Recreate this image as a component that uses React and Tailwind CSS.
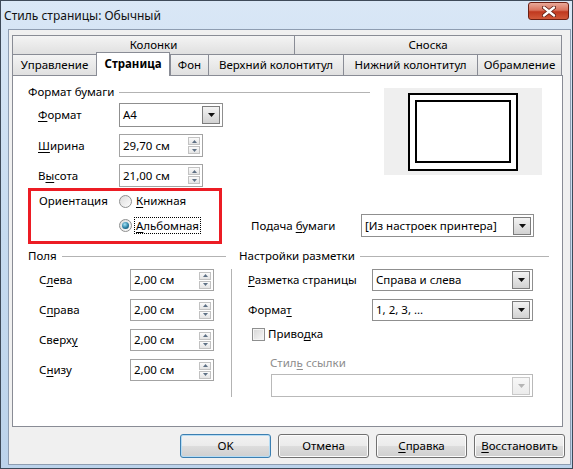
import React from "react";

const U = ({ children }) => (
  <span className="underline decoration-1 underline-offset-[2px]">{children}</span>
);

function DropBtn({ disabled }) {
  return (
    <div
      className={
        disabled
          ? "ml-auto w-[18px] h-[18px] border border-[#c9c9c9] bg-gradient-to-b from-[#f7f7f7] to-[#ececec] flex items-center justify-center shrink-0"
          : "ml-auto w-[18px] h-[18px] border border-[#7d7d7d] bg-gradient-to-b from-[#f3f3f3] to-[#d2d2d2] flex items-center justify-center shrink-0"
      }
    >
      <svg width="7" height="4" viewBox="0 0 7 4">
        <path d="M0 0h7L3.5 4z" fill={disabled ? "#b5b5b5" : "#111"} />
      </svg>
    </div>
  );
}

function Select({ className, value, disabled }) {
  return (
    <div
      className={`flex items-center bg-white pl-[3px] pr-[2px] border ${
        disabled ? "border-[#b9b9b9]" : "border-[#8f8f8f]"
      } ${className}`}
    >
      <span className="whitespace-nowrap">{value}</span>
      <DropBtn disabled={disabled} />
    </div>
  );
}

function Arrow({ up }) {
  return (
    <div className="w-[12px] h-[8px] border border-[#c2c2c2] bg-gradient-to-b from-[#fbfbfb] to-[#e4e4e4] flex items-center justify-center">
      <svg width="5" height="3" viewBox="0 0 5 3">
        <path d={up ? "M2.5 0L5 3H0z" : "M0 0h5L2.5 3z"} fill="#5f7185" />
      </svg>
    </div>
  );
}

function Spin({ className, value }) {
  return (
    <div className={`flex items-center bg-white pl-[3px] pr-[2px] border border-[#a3a3a3] ${className}`}>
      <span className="whitespace-nowrap">{value}</span>
      <div className="ml-auto flex flex-col gap-[1px]">
        <Arrow up />
        <Arrow />
      </div>
    </div>
  );
}

function Radio({ checked }) {
  return (
    <div className="w-[13px] h-[13px] rounded-full border border-[#8e8f8f] bg-gradient-to-br from-[#dcdcdc] to-[#fdfdfd] flex items-center justify-center shrink-0">
      {checked && (
        <div className="w-[7px] h-[7px] rounded-full bg-[radial-gradient(circle_at_40%_35%,#a6e3f6,#2a7fa3_55%,#0d3b52)]" />
      )}
    </div>
  );
}

function GroupHead({ title, className }) {
  return (
    <div className={`flex items-center h-[16px] ${className}`}>
      <span className="whitespace-nowrap">{title}</span>
      <div className="flex-1 h-px bg-[#b3b3b3] ml-[5px]" />
    </div>
  );
}

function Btn({ children, primary }) {
  return (
    <div
      className={
        primary
          ? "w-[91px] h-[24px] rounded-[3px] border border-[#3c7fb1] shadow-[inset_0_0_0_1px_#b5dcf4] bg-[linear-gradient(#f2f2f2_0%,#ebebeb_50%,#dddddd_50%,#cfcfcf_100%)] flex items-center justify-center"
          : "w-[91px] h-[24px] rounded-[3px] border border-[#707070] shadow-[inset_0_0_0_1px_#fcfcfc] bg-[linear-gradient(#f2f2f2_0%,#ebebeb_50%,#dddddd_50%,#cfcfcf_100%)] flex items-center justify-center"
      }
    >
      {children}
    </div>
  );
}

export default function App() {
  const tab = "h-[21px] border-t border-l border-[#898c95] bg-gradient-to-b from-[#f4f4f4] to-[#e0e0e0] flex items-center justify-center";
  return (
    <div className="w-[573px] h-[469px] font-['Noto_Sans',sans-serif] text-[11.5px] leading-[16px] text-black">
      <div className="w-full h-full border border-[#3e4a59] bg-gradient-to-b from-[#d9e7f6] via-[#c6dbf0] to-[#bcd3eb] flex flex-col">
        {/* title bar */}
        <div className="h-[28px] flex items-start justify-between">
          <div className="mt-[7px] ml-[3px] text-[12px] text-[#111]">Стиль страницы: Обычный</div>
          <div className="mt-[1px] mr-[3px] w-[41px] h-[18px] rounded-[3px] border border-[#6b2014] bg-[linear-gradient(#e9a999_0%,#d9735d_45%,#c0381f_55%,#d2593a_100%)] flex items-center justify-center">
            <svg width="14" height="11" viewBox="0 0 14 11">
              <path d="M2 1.5l10 8M12 1.5l-10 8" stroke="#5a1a10" strokeWidth="4" strokeLinecap="round" />
              <path d="M2 1.5l10 8M12 1.5l-10 8" stroke="#fff" strokeWidth="2.4" strokeLinecap="round" />
            </svg>
          </div>
        </div>

        {/* client area */}
        <div className="flex-1 ml-[7px] mr-[1px] mb-[3px] border border-[#8e9db1] bg-[#f0f0f0] pt-[5px] pl-[3px] pr-[7px] flex flex-col">
          {/* tabs row 1 */}
          <div className="flex h-[19px]">
            <div className="w-[282px] border-t border-l border-[#898c95] bg-gradient-to-b from-[#f4f4f4] to-[#e0e0e0] flex items-center justify-center">
              Колонки
            </div>
            <div className="w-[268px] border-t border-l border-r border-[#898c95] bg-gradient-to-b from-[#f4f4f4] to-[#e0e0e0] flex items-center justify-center">
              Сноска
            </div>
          </div>
          {/* tabs row 2 */}
          <div className="flex items-end h-[21px]">
            <div className={`w-[84px] ${tab}`}>Управление</div>
            <div className="w-[74px] h-[24px] relative top-px z-10 border-t border-l border-r border-[#898c95] bg-white flex items-center justify-center font-bold pb-[2px]">
              Страница
            </div>
            <div className={`w-[38px] ${tab}`}>Фон</div>
            <div className={`w-[135px] ${tab}`}>Верхний колонтитул</div>
            <div className={`w-[134px] ${tab}`}>Нижний колонтитул</div>
            <div className={`w-[85px] ${tab} border-r`}>Обрамление</div>
          </div>

          {/* panel */}
          <div className="h-[352px] border border-[#898c95] bg-white pl-[15px] pt-[8px]">
            {/* paper format + preview */}
            <div className="flex">
              <div className="w-[342px]">
                <GroupHead title="Формат бумаги" />
                <div className="flex items-center mt-[3px]">
                  <div className="w-[91px] pl-[10px]">
                    <U>Ф</U>ормат
                  </div>
                  <Select className="w-[104px] h-[24px]" value="A4" />
                </div>
                <div className="flex items-center mt-[7px]">
                  <div className="w-[91px] pl-[10px]">
                    <U>Ш</U>ирина
                  </div>
                  <Spin className="w-[84px] h-[23px]" value="29,70 см" />
                </div>
                <div className="flex items-center mt-[7px]">
                  <div className="w-[91px] pl-[10px]">
                    В<U>ы</U>сота
                  </div>
                  <Spin className="w-[84px] h-[23px]" value="21,00 см" />
                </div>
              </div>
              <div className="ml-[14px] mt-[4px] w-[158px] h-[87px] bg-[#efefef] flex items-center justify-center">
                <div className="w-[110px] h-[78px] border-2 border-black bg-white flex items-center justify-center">
                  <div className="w-[96px] h-[63px] border-2 border-black" />
                </div>
              </div>
            </div>

            {/* orientation + paper tray */}
            <div className="flex items-end mt-[1px]">
              <div className="w-[194px] h-[56px] border-[3px] border-[#ec1c24] pl-[8px] pt-[2px]">
                <div className="flex items-center h-[16px]">
                  <div className="w-[80px]">Ориентация</div>
                  <Radio />
                  <span className="ml-[4px]">
                    <U>К</U>нижная
                  </span>
                </div>
                <div className="flex items-center h-[16px] mt-[8px]">
                  <div className="w-[80px]" />
                  <Radio checked />
                  <span className="ml-[2px] border border-dotted border-black px-px leading-[15px]">
                    <U>А</U>льбомная
                  </span>
                </div>
              </div>
              <div className="flex items-center ml-[29px] mb-[7px]">
                <div className="w-[110px]">
                  Подача <U>б</U>умаги
                </div>
                <Select className="w-[173px] h-[23px]" value="[Из настроек принтера]" />
              </div>
            </div>

            {/* margins + layout settings */}
            <div className="flex mt-[4px]">
              <div className="w-[203px]">
                <GroupHead title="Поля" className="mr-[5px]" />
                <div className="mt-[5px] flex flex-col gap-[8px]">
                  {[
                    ["С", "л", "ева"],
                    ["С", "п", "рава"],
                    ["Сверх", "у", ""],
                    ["С", "н", "изу"],
                  ].map(([a, u, b]) => (
                    <div key={a + u} className="flex items-center">
                      <div className="w-[102px] pl-[11px]">
                        {a}
                        <U>{u}</U>
                        {b}
                      </div>
                      <Spin className="w-[84px] h-[22px]" value="2,00 см" />
                    </div>
                  ))}
                </div>
              </div>
              <div className="w-[318px]">
                <GroupHead title="Настройки разметки" className="pl-[8px]" />
                <div className="mt-[5px] h-[128px] border-l border-[#b3b3b3] pl-[16px]">
                  <div className="flex items-center">
                    <div className="w-[124px]">
                      <U>Р</U>азметка страницы
                    </div>
                    <Select className="w-[161px] h-[22px]" value="Справа и слева" />
                  </div>
                  <div className="flex items-center mt-[8px]">
                    <div className="w-[124px]">
                      Форма<U>т</U>
                    </div>
                    <Select className="w-[161px] h-[22px]" value="1, 2, 3, ..." />
                  </div>
                  <div className="flex items-center h-[16px] mt-[5px] ml-[4px]">
                    <div className="w-[13px] h-[13px] border border-[#8e8f8f] bg-gradient-to-br from-[#d6d6d6] to-[#f8f8f8] shadow-[inset_0_0_0_1px_#f4f4f4]" />
                    <span className="ml-[3px]">
                      Приво<U>д</U>ка
                    </span>
                  </div>
                  <div className="h-[16px] mt-[13px] ml-[22px] text-[#8d8d8d]">
                    Стил<U>ь</U> ссылки
                  </div>
                  <Select className="mt-[3px] ml-[23px] w-[262px] h-[23px]" value="" disabled />
                </div>
              </div>
            </div>
          </div>

          {/* buttons */}
          <div className="flex justify-end gap-[7px] mt-[7px] -mr-[2px]">
            <Btn primary>OK</Btn>
            <Btn>Отмена</Btn>
            <Btn>
              <span>
                <U>С</U>правка
              </span>
            </Btn>
            <Btn>
              <span>
                <U>В</U>осстановить
              </span>
            </Btn>
          </div>
        </div>
      </div>
    </div>
  );
}
